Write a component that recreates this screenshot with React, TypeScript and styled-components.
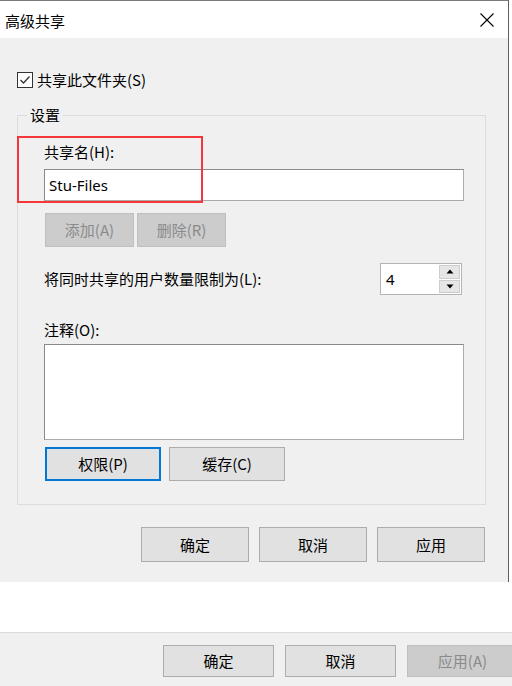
import React from "react";
import styled, { createGlobalStyle } from "styled-components";

const Global = createGlobalStyle`
  html, body { margin: 0; padding: 0; background: #fff; }
  body { font-family: "Noto Sans CJK SC", "Noto Sans", sans-serif; color: #000; }
  * { box-sizing: border-box; }
`;

const Page = styled.div`
  width: 512px;
  height: 686px;
  display: flex;
  flex-direction: column;
  background: #fff;
  overflow: hidden;
`;

const Dialog = styled.div`
  width: 509px;
  height: 582px;
  flex-shrink: 0;
  border-right: 1px solid #5f5f5f;
  background: #f0f0f0;
  display: flex;
  flex-direction: column;
`;

const TitleBar = styled.div`
  height: 38px;
  border-top: 1px solid #7b7b7b;
  background: #fff;
  display: flex;
  align-items: center;
  justify-content: space-between;
  padding-left: 5px;
`;

const Title = styled.span`
  font-size: 15px;
  line-height: 20px;
  margin-top: 2px;
`;

const Close = styled.div`
  width: 42px;
  height: 37px;
  display: flex;
  align-items: center;
  justify-content: center;
`;

const Body = styled.div`
  position: relative;
  flex: 1;
  padding: 34px 0 0 17px;
`;

const CheckRow = styled.div`
  display: flex;
  align-items: center;
  gap: 4px;
  height: 16px;
`;

const CheckBox = styled.div`
  width: 16px;
  height: 16px;
  border: 1px solid #333;
  background: #fff;
  display: flex;
  align-items: center;
  justify-content: center;
`;

const Text = styled.span<{ $disabled?: boolean }>`
  font-size: 15px;
  line-height: 20px;
  color: ${(p) => (p.$disabled ? "#8a8a8a" : "#000")};
  white-space: nowrap;
`;

const Group = styled.div`
  position: relative;
  margin-top: 27px;
  width: 469px;
  height: 390px;
  border: 1px solid #dcdcdc;
`;

const GroupTitle = styled.span`
  position: absolute;
  top: -11px;
  left: 9px;
  padding: 0 3px;
  background: #f0f0f0;
  font-size: 15px;
  line-height: 20px;
`;

const GroupInner = styled.div`
  padding: 26px 22px 0 26px;
  display: flex;
  flex-direction: column;
`;

const Label = styled.div<{ $top: number }>`
  margin-top: ${(p) => p.$top}px;
  font-size: 15px;
  line-height: 20px;
`;

const TextField = styled.div<{ $top: number; $h: number }>`
  margin-top: ${(p) => p.$top}px;
  width: 420px;
  height: ${(p) => p.$h}px;
  background: #fff;
  border: 1px solid #8a8a8a;
  border-bottom-color: #ababab;
  border-right-color: #ababab;
  padding-left: 4px;
  font-size: 15px;
  line-height: 30px;
  font-family: "Noto Sans", "Noto Sans CJK SC", sans-serif;
`;

const ButtonRow = styled.div<{ $top: number; $gap: number }>`
  margin-top: ${(p) => p.$top}px;
  margin-left: 1px;
  display: flex;
  gap: ${(p) => p.$gap}px;
`;

const Button = styled.div<{ $w: number; $h: number; $disabled?: boolean; $focus?: boolean }>`
  width: ${(p) => p.$w}px;
  height: ${(p) => p.$h}px;
  flex-shrink: 0;
  display: flex;
  align-items: center;
  justify-content: center;
  font-size: 15px;
  line-height: 20px;
  background: ${(p) => (p.$disabled ? "#cccccc" : "#e1e1e1")};
  color: ${(p) => (p.$disabled ? "#8a8a8a" : "#000")};
  border: ${(p) =>
    p.$focus ? "2px solid #0078d7" : p.$disabled ? "1px solid #bfbfbf" : "1px solid #adadad"};
`;

const LimitRow = styled.div`
  margin-top: 16px;
  width: 418px;
  height: 32px;
  display: flex;
  align-items: center;
  justify-content: space-between;
`;

const Spinner = styled.div`
  width: 82px;
  height: 32px;
  background: #fff;
  border: 1px solid #b4b4b4;
  display: flex;
`;

const SpinValue = styled.div`
  flex: 1;
  padding-left: 5px;
  font-size: 15px;
  line-height: 30px;
  font-family: "Noto Sans", sans-serif;
`;

const SpinButtons = styled.div`
  width: 22px;
  display: flex;
  flex-direction: column;
  gap: 1px;
  padding: 1px 1px 1px 0;
`;

const SpinBtn = styled.div`
  flex: 1;
  background: #e6e6e6;
  border: 1px solid #cdcdcd;
  display: flex;
  align-items: center;
  justify-content: center;
`;

const MainButtons = styled.div`
  margin-top: 22px;
  width: 469px;
  padding-right: 1px;
  display: flex;
  justify-content: flex-end;
  gap: 10px;
`;

const Highlight = styled.div`
  position: absolute;
  left: 17px;
  top: 98px;
  width: 186px;
  height: 67px;
  border: 2px solid #f5363b;
`;

const Blank = styled.div`
  height: 50px;
  flex-shrink: 0;
  background: #fff;
`;

const Footer = styled.div`
  flex: 1;
  border-top: 1px solid #dadada;
  background: #f0f0f0;
  display: flex;
  gap: 11px;
  padding: 12px 0 0 163px;
`;

const Arrow = ({ up }: { up?: boolean }) => (
  <svg width="8" height="5" viewBox="0 0 8 5">
    <polygon points={up ? "4,0.5 7.5,4.5 0.5,4.5" : "0.5,0.5 7.5,0.5 4,4.5"} fill="#000" />
  </svg>
);

export default function App() {
  return (
    <Page>
      <Global />
      <Dialog>
        <TitleBar>
          <Title>高级共享</Title>
          <Close>
            <svg width="14" height="14" viewBox="0 0 14 14">
              <path d="M0.5 0.5 L13.5 13.5 M13.5 0.5 L0.5 13.5" stroke="#000" strokeWidth="1.1" />
            </svg>
          </Close>
        </TitleBar>
        <Body>
          <CheckRow>
            <CheckBox>
              <svg width="12" height="12" viewBox="0 0 12 12">
                <path d="M1.5 6 L4.5 9 L10.5 2.5" stroke="#333" strokeWidth="1.3" fill="none" />
              </svg>
            </CheckBox>
            <Text>共享此文件夹(S)</Text>
          </CheckRow>
          <Group>
            <GroupTitle>设置</GroupTitle>
            <GroupInner>
              <Label $top={0}>共享名(H):</Label>
              <TextField $top={7} $h={32}>Stu-Files</TextField>
              <ButtonRow $top={12} $gap={3}>
                <Button $w={89} $h={34} $disabled>添加(A)</Button>
                <Button $w={89} $h={34} $disabled>删除(R)</Button>
              </ButtonRow>
              <LimitRow>
                <Text>将同时共享的用户数量限制为(L):</Text>
                <Spinner>
                  <SpinValue>4</SpinValue>
                  <SpinButtons>
                    <SpinBtn><Arrow up /></SpinBtn>
                    <SpinBtn><Arrow /></SpinBtn>
                  </SpinButtons>
                </Spinner>
              </LimitRow>
              <Label $top={25}>注释(O):</Label>
              <TextField $top={4} $h={96} />
              <ButtonRow $top={7} $gap={8}>
                <Button $w={116} $h={34} $focus>权限(P)</Button>
                <Button $w={116} $h={34}>缓存(C)</Button>
              </ButtonRow>
            </GroupInner>
          </Group>
          <MainButtons>
            <Button $w={108} $h={35}>确定</Button>
            <Button $w={108} $h={35}>取消</Button>
            <Button $w={108} $h={35}>应用</Button>
          </MainButtons>
          <Highlight />
        </Body>
      </Dialog>
      <Blank />
      <Footer>
        <Button $w={111} $h={32}>确定</Button>
        <Button $w={111} $h={32}>取消</Button>
        <Button $w={111} $h={32} $disabled>应用(A)</Button>
      </Footer>
    </Page>
  );
}
